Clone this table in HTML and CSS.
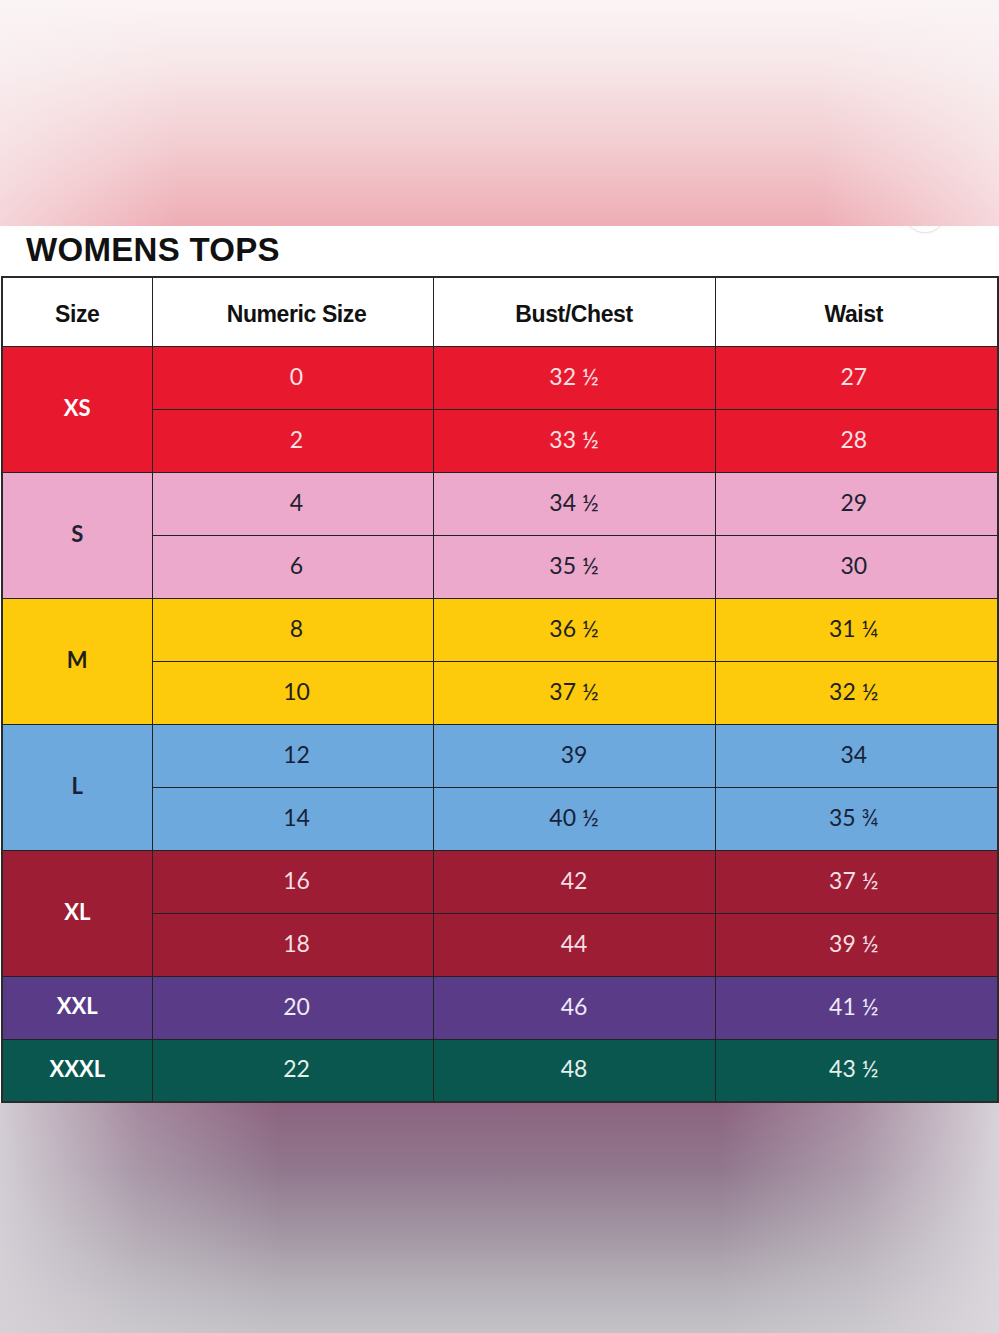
FILE: index.html
```html
<!DOCTYPE html>
<html lang="en">
<head>
<meta charset="utf-8">
<title>Womens Tops Size Chart</title>
<link rel="stylesheet" href="styles.css">
</head>
<body>
<div class="page">
  <div class="blur-top"></div>
  <div class="dot"></div>
  <section class="chart">
    <h1 class="title">WOMENS TOPS</h1>
    <table class="sizes">
      <colgroup>
        <col class="c1"><col class="c2"><col class="c3"><col class="c4">
      </colgroup>
      <thead>
        <tr><th>Size</th><th class="num">Numeric Size</th><th>Bust/Chest</th><th class="wst">Waist</th></tr>
      </thead>
      <tbody>
        <tr class="xs"><td class="sz" rowspan="2">XS</td><td class="num">0</td><td>32 ½</td><td class="wst">27</td></tr>
        <tr class="xs"><td class="num">2</td><td>33 ½</td><td class="wst">28</td></tr>
        <tr class="s"><td class="sz" rowspan="2">S</td><td class="num">4</td><td>34 ½</td><td class="wst">29</td></tr>
        <tr class="s"><td class="num">6</td><td>35 ½</td><td class="wst">30</td></tr>
        <tr class="m"><td class="sz" rowspan="2">M</td><td class="num">8</td><td>36 ½</td><td class="wst">31 ¼</td></tr>
        <tr class="m"><td class="num">10</td><td>37 ½</td><td class="wst">32 ½</td></tr>
        <tr class="l"><td class="sz" rowspan="2">L</td><td class="num">12</td><td>39</td><td class="wst">34</td></tr>
        <tr class="l"><td class="num">14</td><td>40 ½</td><td class="wst">35 ¾</td></tr>
        <tr class="xl"><td class="sz" rowspan="2">XL</td><td class="num">16</td><td>42</td><td class="wst">37 ½</td></tr>
        <tr class="xl"><td class="num">18</td><td>44</td><td class="wst">39 ½</td></tr>
        <tr class="xxl"><td class="sz">XXL</td><td class="num">20</td><td>46</td><td class="wst">41 ½</td></tr>
        <tr class="xxxl"><td class="sz">XXXL</td><td class="num">22</td><td>48</td><td class="wst">43 ½</td></tr>
      </tbody>
    </table>
  </section>
  <div class="blur-bottom"></div>
</div>
</body>
</html>
```
FILE: styles.css
```css
* { box-sizing: border-box; }
html, body { margin: 0; padding: 0; }
body {
  width: 999px;
  height: 1333px;
  overflow: hidden;
  background: #ffffff;
  font-family: "Lato", "Liberation Sans", sans-serif;
}
.page {
  position: relative;
  display: flex;
  flex-direction: column;
  width: 999px;
  height: 1333px;
}
.blur-top {
  position: relative;
  z-index: 3;
  height: 226px;
  flex: none;
  background:
    linear-gradient(to right, rgba(250,244,245,0.55) 0%, rgba(250,244,245,0) 18%, rgba(250,244,245,0) 82%, rgba(250,244,245,0.6) 100%),
    linear-gradient(to bottom, #fbf4f5 0%, #f7e6e8 30%, #f2ccd0 65%, #eeadb5 100%);
}
.dot {
  position: absolute;
  left: 904px;
  top: 190px;
  width: 42px;
  height: 42px;
  border-radius: 50%;
  background: #ffffff;
  box-shadow: 0 1px 2px rgba(0,0,0,0.14);
  z-index: 2;
}
.chart {
  position: relative;
  z-index: 1;
  background: #ffffff;
  padding-top: 1px;
  flex: none;
}
.title {
  margin: 0;
  padding: 3px 0 0 26px;
  height: 49px;
  font-family: "Liberation Sans", "Arial", sans-serif;
  font-weight: 700;
  font-size: 33px;
  line-height: 40px;
  color: #111111;
  letter-spacing: 0.3px;
}
.sizes {
  margin-left: 1px;
  width: 996px;
  table-layout: fixed;
  border-collapse: collapse;
  border: 2px solid #2a2a2a;
}
.c1 { width: 150px; }
.c2 { width: 281px; }
.c3 { width: 282px; }
.c4 { width: 283px; }
.sizes th, .sizes td {
  border: 1.5px solid #222222;
  text-align: center;
  vertical-align: middle;
  padding: 0;
}
.sizes th {
  height: 69px;
  padding-top: 6px;
  background: #ffffff;
  color: #111111;
  font-family: "Liberation Sans", "Arial", sans-serif;
  font-weight: 700;
  font-size: 23px;
  letter-spacing: -0.4px;
}
.sizes td {
  height: 63px;
  padding-bottom: 4px;
  font-size: 23px;
  font-weight: 400;
}
.sizes .num { padding-left: 8px; }
.sizes .wst { padding-right: 5px; }
.sizes td.sz {
  font-weight: 700;
  font-size: 22px;
}
.xs td { background: #e8192f; color: #f8e1e3; }
.xs td.sz { color: #ffffff; }
.s td { background: #eca9cc; color: #1d2230; }
.m td { background: #fdcb0b; color: #1f1f1f; }
.l td { background: #6ea9dd; color: #172238; }
.xl td { background: #9d1d34; color: #f6dfe3; }
.xl td.sz { color: #ffffff; }
.xxl td { background: #5a3b88; color: #efe8f5; }
.xxl td.sz { color: #ffffff; }
.xxxl td { background: #09574f; color: #e4f0ec; }
.xxxl td.sz { color: #ffffff; }
.blur-bottom {
  flex: 1;
  background:
    linear-gradient(to right, rgba(214,210,216,0.95) 0%, rgba(214,210,216,0.35) 14%, rgba(214,210,216,0) 28%, rgba(214,210,216,0) 72%, rgba(214,210,216,0.4) 86%, rgba(220,216,222,0.95) 100%),
    linear-gradient(to bottom, #8c6380 0%, #91788e 30%, #a59aa6 60%, #bab6bd 85%, #c4c1c7 100%);
}
```
